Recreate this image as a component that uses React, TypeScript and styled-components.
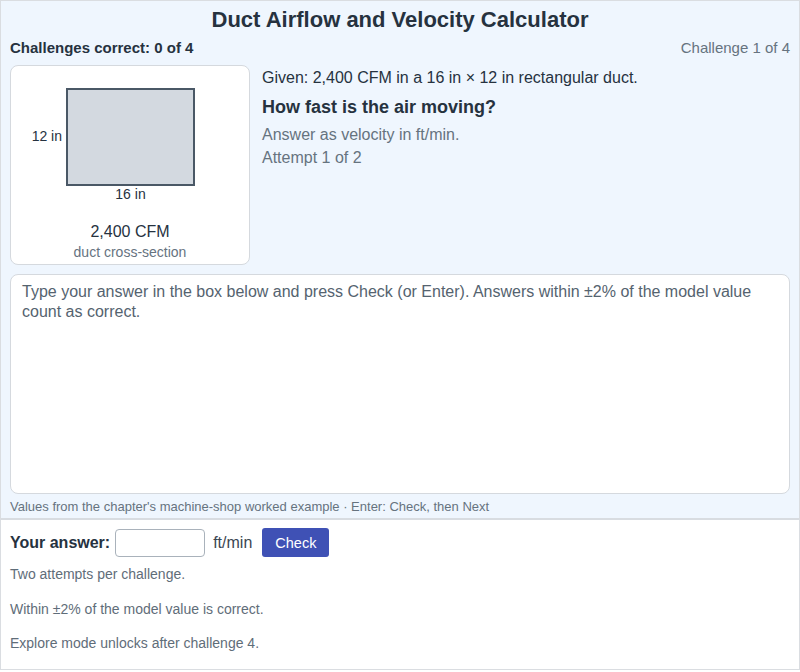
import styled, { createGlobalStyle } from "styled-components";

const GlobalStyle = createGlobalStyle`
  html, body {
    margin: 0;
    padding: 0;
    background: #ffffff;
  }
  body {
    font-family: "Liberation Sans", Arial, sans-serif;
    color: #26323f;
  }
`;

const Frame = styled.div`
  width: 800px;
  box-sizing: border-box;
  border: 1px solid #dadde1;
`;

const TopPanel = styled.div`
  background: #eff6fe;
  padding: 0 9px 3px;
  border-bottom: 2px solid #d8dce1;
`;

const Title = styled.h1`
  margin: 0;
  padding-top: 7px;
  font-size: 22px;
  line-height: 24px;
  font-weight: 700;
  text-align: center;
  color: #26323f;
`;

const StatusRow = styled.div`
  display: flex;
  justify-content: space-between;
  align-items: center;
  margin-top: 7px;
  font-size: 15px;
  line-height: 18px;
`;

const Score = styled.span`
  font-weight: 700;
  color: #26323f;
`;

const Progress = styled.span`
  color: #66737f;
`;

const ChallengeRow = styled.div`
  display: flex;
  gap: 12px;
  margin-top: 8px;
`;

const Card = styled.div`
  width: 240px;
  height: 200px;
  box-sizing: border-box;
  flex-shrink: 0;
  background: #ffffff;
  border: 1px solid #d5d9de;
  border-radius: 8px;
  display: flex;
  flex-direction: column;
  align-items: center;
`;

const Diagram = styled.svg`
  display: block;
  width: 238px;
  height: 156px;
`;

const FlowValue = styled.div`
  font-size: 16px;
  line-height: 20px;
  color: #26323f;
`;

const Caption = styled.div`
  font-size: 14px;
  line-height: 20px;
  color: #66737f;
`;

const Question = styled.div`
  display: flex;
  flex-direction: column;
  padding-top: 3px;
`;

const Line = styled.div<{ $tone?: "muted" | "strong"; $gap?: number }>`
  font-size: ${(p) => (p.$tone === "strong" ? "18px" : "16px")};
  font-weight: ${(p) => (p.$tone === "strong" ? 700 : 400)};
  line-height: ${(p) => (p.$tone === "strong" ? "22px" : "20px")};
  color: ${(p) => (p.$tone === "muted" ? "#66737f" : "#26323f")};
  margin-top: ${(p) => p.$gap ?? 0}px;
`;

const PromptBox = styled.div`
  margin-top: 9px;
  height: 220px;
  box-sizing: border-box;
  background: #ffffff;
  border: 1px solid #d5d9de;
  border-radius: 8px;
  padding: 7px 11px;
  font-size: 16px;
  line-height: 19.5px;
  color: #55636f;
`;

const Footnote = styled.div`
  margin-top: 5px;
  font-size: 13px;
  line-height: 16px;
  color: #66737f;
`;

const BottomPanel = styled.div`
  padding: 8px 9px 17px;
`;

const AnswerRow = styled.div`
  display: flex;
  align-items: center;
  height: 29px;
`;

const AnswerLabel = styled.label`
  font-size: 16px;
  font-weight: 700;
  color: #26323f;
`;

const AnswerInput = styled.input`
  width: 90px;
  height: 28px;
  box-sizing: border-box;
  margin-left: 5px;
  border: 1px solid #a9b2bb;
  border-radius: 4px;
  background: #ffffff;
  font: inherit;
  font-size: 15px;
  padding: 0 6px;
`;

const Unit = styled.span`
  margin-left: 8px;
  font-size: 16px;
  color: #3b4652;
`;

const CheckButton = styled.button`
  margin-left: 10px;
  height: 29px;
  padding: 0 13px;
  border: none;
  border-radius: 3px;
  background: #3f51b5;
  color: #ffffff;
  font-family: inherit;
  font-size: 14.5px;
  cursor: pointer;
`;

const Notes = styled.div`
  margin-top: 9px;
`;

const Note = styled.p`
  margin: 0 0 17.5px;
  font-size: 14px;
  line-height: 17px;
  color: #5f6d79;

  &:last-child {
    margin-bottom: 0;
  }
`;

const DuctSection = () => (
  <Diagram viewBox="0 0 238 156">
    <rect
      x={56}
      y={23}
      width={127}
      height={96}
      fill="#d3d9e0"
      stroke="#4a5866"
      strokeWidth={2}
    />
    <text
      x={51}
      y={75}
      textAnchor="end"
      fontSize={14}
      fill="#26323f"
      fontFamily="Liberation Sans, Arial, sans-serif"
    >
      12 in
    </text>
    <text
      x={119.5}
      y={133}
      textAnchor="middle"
      fontSize={14}
      fill="#26323f"
      fontFamily="Liberation Sans, Arial, sans-serif"
    >
      16 in
    </text>
  </Diagram>
);

const App = () => {
  return (
    <>
      <GlobalStyle />
      <Frame>
        <TopPanel>
          <Title>Duct Airflow and Velocity Calculator</Title>
          <StatusRow>
            <Score>Challenges correct: 0 of 4</Score>
            <Progress>Challenge 1 of 4</Progress>
          </StatusRow>

          <ChallengeRow>
            <Card>
              <DuctSection />
              <FlowValue>2,400 CFM</FlowValue>
              <Caption>duct cross-section</Caption>
            </Card>

            <Question>
              <Line>Given: 2,400 CFM in a 16 in × 12 in rectangular duct.</Line>
              <Line $tone="strong" $gap={8}>
                How fast is the air moving?
              </Line>
              <Line $tone="muted" $gap={7}>
                Answer as velocity in ft/min.
              </Line>
              <Line $tone="muted" $gap={3}>
                Attempt 1 of 2
              </Line>
            </Question>
          </ChallengeRow>

          <PromptBox>
            Type your answer in the box below and press Check (or Enter).
            Answers within ±2% of the model value count as correct.
          </PromptBox>

          <Footnote>
            Values from the chapter's machine-shop worked example · Enter:
            Check, then Next
          </Footnote>
        </TopPanel>

        <BottomPanel>
          <AnswerRow>
            <AnswerLabel htmlFor="answer">Your answer:</AnswerLabel>
            <AnswerInput id="answer" type="text" />
            <Unit>ft/min</Unit>
            <CheckButton>Check</CheckButton>
          </AnswerRow>

          <Notes>
            <Note>Two attempts per challenge.</Note>
            <Note>Within ±2% of the model value is correct.</Note>
            <Note>Explore mode unlocks after challenge 4.</Note>
          </Notes>
        </BottomPanel>
      </Frame>
    </>
  );
};

export default App;
